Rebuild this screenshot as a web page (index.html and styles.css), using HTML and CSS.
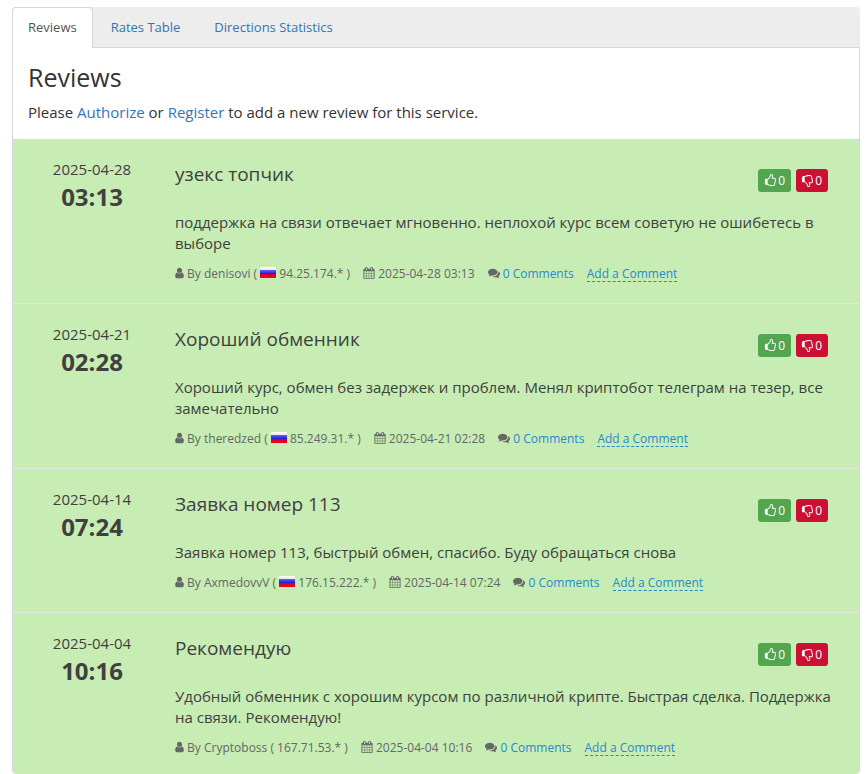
FILE: index.html
```html
<!DOCTYPE html>
<html lang="en">
<head>
<meta charset="utf-8">
<title>Reviews</title>
<meta name="viewport" content="width=device-width, initial-scale=1">
<link rel="stylesheet" href="styles.css">
</head>
<body>
<svg class="sprite" aria-hidden="true">
  <symbol id="user" viewBox="256 0 1280 1792"><path d="M1536 1399q0 109-62.5 187t-150.5 78h-854q-88 0-150.5-78t-62.5-187q0-85 8.5-160.5t31.5-152 58.5-131 94-89 134.5-34.5q131 128 313 128t313-128q76 0 134.5 34.5t94 89 58.5 131 31.5 152 8.5 160.5zm-256-887q0 159-112.5 271.5t-271.5 112.5-271.5-112.5-112.5-271.5 112.5-271.5 271.5-112.5 271.5 112.5 112.5 271.5z"/></symbol>
  <symbol id="calendar" viewBox="64 0 1664 1792"><path d="M192 1664h288v-288h-288v288zm352 0h320v-288h-320v288zm-352-352h288v-320h-288v320zm352 0h320v-320h-320v320zm-352-384h288v-288h-288v288zm736 736h320v-288h-320v288zm-384-736h320v-288h-320v288zm768 736h288v-288h-288v288zm-384-352h320v-320h-320v320zm-352-864v-288q0-13-9.5-22.5t-22.5-9.5h-64q-13 0-22.5 9.5t-9.5 22.5v288q0 13 9.5 22.5t22.5 9.5h64q13 0 22.5-9.5t9.5-22.5zm736 864h288v-320h-288v320zm-384-384h320v-288h-320v288zm384 0h288v-288h-288v288zm32-480v-288q0-13-9.5-22.5t-22.5-9.5h-64q-13 0-22.5 9.5t-9.5 22.5v288q0 13 9.5 22.5t22.5 9.5h64q13 0 22.5-9.5t9.5-22.5zm384-64v1280q0 52-38 90t-90 38h-1408q-52 0-90-38t-38-90v-1280q0-52 38-90t90-38h128v-96q0-66 47-113t113-47h64q66 0 113 47t47 113v96h384v-96q0-66 47-113t113-47h64q66 0 113 47t47 113v96h128q52 0 90 38t38 90z"/></symbol>
  <symbol id="comments" viewBox="0 0 1792 1792"><path d="M1408 768q0 139-94 257t-256.5 186.5-353.5 68.5q-86 0-176-16-124 88-278 128-36 9-86 16h-3q-11 0-20.5-8t-11.5-21q-1-3-1-6.5t.5-6.5 2-6l2.5-5 3.5-5.5 4-5 4.5-5 4-4.5q5-6 23-25t26-29.5 22.5-29 25-38.5 20.5-44q-124-72-195-177t-71-224q0-139 94-257t256.5-186.5 353.5-68.5 353.5 68.5 256.5 186.5 94 257zm384 256q0 120-71 224.5t-195 176.5q10 24 20.5 44t25 38.5 22.5 29 26 29.5 23 25q1 1 4 4.5t4.5 5 4 5 3.5 5.5l2.5 5 2 6 .5 6.5-1 6.5q-3 14-13 22t-22 7q-50-7-86-16-154-40-278-128-90 16-176 16-271 0-472-132 58 4 88 4 161 0 309-45t264-129q125-92 192-212t67-254q0-77-23-152 129 71 204 178t75 230z"/></symbol>
  <symbol id="up" viewBox="0 0 1664 1792"><path d="M256 1408q0-26-19-45t-45-19-45 19-19 45 19 45 45 19 45-19 19-45zm1280-640q0-51-39-89.5t-89-38.5h-352q0-58 48-159.5t48-160.5q0-98-32-145t-128-47q-26 26-38 85t-30.5 125.5-59.5 109.5q-22 23-77 91-4 5-23 30t-31.5 41-34.5 42.5-40 44-38.5 35.5-40 27-35.5 9h-32v640h32q13 0 31.5 3t33 6.5 38 11 35 11.5 35.5 12.5 29 10.5q211 73 342 73h121q192 0 192-167 0-26-5-56 30-16 47.5-52.5t17.5-73.5-18-69q53-50 53-119 0-25-10-55.5t-25-47.5q32-1 53.5-47t21.5-81zm128-1q0 89-49 163 9 33 9 69 0 77-38 144 3 21 3 43 0 101-60 178 1 139-85 219.5t-227 80.5h-129q-96 0-189.5-22.5t-216.5-65.5q-116-40-138-40h-288q-53 0-90.5-37.5t-37.5-90.5v-640q0-53 37.5-90.5t90.5-37.5h274q36-24 137-155 58-75 107-128 24-25 35.5-85.5t30.5-126.5 62-108q39-37 90-37 84 0 151 32.5t102 101.5 35 186q0 93-48 192h176q104 0 180 76t76 179z"/></symbol>
  <symbol id="down" viewBox="0 0 1664 1792"><use href="#up" width="1664" height="1792" transform="translate(0 1792) scale(1 -1)"/></symbol>
  <linearGradient id="w" x2="0" y2="1"><stop offset="0" stop-color="#fff"/><stop offset="1" stop-color="#ddd"/></linearGradient>
  <linearGradient id="b" x2="0" y2="1"><stop offset="0" stop-color="#6464f5"/><stop offset="1" stop-color="#0505c8"/></linearGradient>
  <linearGradient id="r" x2="0" y2="1"><stop offset="0" stop-color="#c8003c"/><stop offset="1" stop-color="#fa0014"/></linearGradient>
  <symbol id="ru" viewBox="0 0 16 11"><path fill="url(#w)" d="M0 0h16v4H0z"/><path fill="url(#b)" d="M0 3h16v5H0z"/><path fill="url(#r)" d="M0 7h16v4H0z"/></symbol>
</svg>

<main class="panel">
  <nav class="tabs">
    <a class="tab active" href="#reviews">Reviews</a>
    <a class="tab" href="#rates">Rates Table</a>
    <a class="tab" href="#directions">Directions Statistics</a>
  </nav>
  <section class="body" id="reviews">
    <header class="intro">
      <h1>Reviews</h1>
      <p>Please <a href="#authorize">Authorize</a> or <a href="#register">Register</a> to add a new review for this service.</p>
    </header>

    <article class="review">
      <div class="when"><span>2025-04-28</span><strong>03:13</strong></div>
      <div class="content">
        <div class="head">
          <h2>узекс топчик</h2>
          <div class="votes">
            <button class="vote good" type="button" aria-label="Like, 0"><svg><use href="#up"/></svg>0</button>
            <button class="vote bad" type="button" aria-label="Dislike, 0"><svg><use href="#down"/></svg>0</button>
          </div>
        </div>
        <p class="text">поддержка на связи отвечает мгновенно. неплохой курс всем советую не ошибетесь в выборе</p>
        <div class="meta">
          <span><svg class="i-user"><use href="#user"/></svg> By denisovi ( <svg class="flag"><use href="#ru"/></svg> 94.25.174.* )</span>
          <span><svg class="i-cal"><use href="#calendar"/></svg> 2025-04-28 03:13</span>
          <span><svg class="i-com"><use href="#comments"/></svg> <a href="#comments-1">0 Comments</a></span>
          <a class="add" href="#add-1">Add a Comment</a>
        </div>
      </div>
    </article>

    <article class="review">
      <div class="when"><span>2025-04-21</span><strong>02:28</strong></div>
      <div class="content">
        <div class="head">
          <h2>Хороший обменник</h2>
          <div class="votes">
            <button class="vote good" type="button" aria-label="Like, 0"><svg><use href="#up"/></svg>0</button>
            <button class="vote bad" type="button" aria-label="Dislike, 0"><svg><use href="#down"/></svg>0</button>
          </div>
        </div>
        <p class="text">Хороший курс, обмен без задержек и проблем. Менял криптобот телеграм на тезер, все замечательно</p>
        <div class="meta">
          <span><svg class="i-user"><use href="#user"/></svg> By theredzed ( <svg class="flag"><use href="#ru"/></svg> 85.249.31.* )</span>
          <span><svg class="i-cal"><use href="#calendar"/></svg> 2025-04-21 02:28</span>
          <span><svg class="i-com"><use href="#comments"/></svg> <a href="#comments-2">0 Comments</a></span>
          <a class="add" href="#add-2">Add a Comment</a>
        </div>
      </div>
    </article>

    <article class="review">
      <div class="when"><span>2025-04-14</span><strong>07:24</strong></div>
      <div class="content">
        <div class="head">
          <h2>Заявка номер 113</h2>
          <div class="votes">
            <button class="vote good" type="button" aria-label="Like, 0"><svg><use href="#up"/></svg>0</button>
            <button class="vote bad" type="button" aria-label="Dislike, 0"><svg><use href="#down"/></svg>0</button>
          </div>
        </div>
        <p class="text">Заявка номер 113, быстрый обмен, спасибо. Буду обращаться снова</p>
        <div class="meta">
          <span><svg class="i-user"><use href="#user"/></svg> By AxmedovvV ( <svg class="flag"><use href="#ru"/></svg> 176.15.222.* )</span>
          <span><svg class="i-cal"><use href="#calendar"/></svg> 2025-04-14 07:24</span>
          <span><svg class="i-com"><use href="#comments"/></svg> <a href="#comments-3">0 Comments</a></span>
          <a class="add" href="#add-3">Add a Comment</a>
        </div>
      </div>
    </article>

    <article class="review">
      <div class="when"><span>2025-04-04</span><strong>10:16</strong></div>
      <div class="content">
        <div class="head">
          <h2>Рекомендую</h2>
          <div class="votes">
            <button class="vote good" type="button" aria-label="Like, 0"><svg><use href="#up"/></svg>0</button>
            <button class="vote bad" type="button" aria-label="Dislike, 0"><svg><use href="#down"/></svg>0</button>
          </div>
        </div>
        <p class="text">Удобный обменник с хорошим курсом по различной крипте. Быстрая сделка. Поддержка на связи. Рекомендую!</p>
        <div class="meta">
          <span><svg class="i-user"><use href="#user"/></svg> By Cryptoboss ( 167.71.53.* )</span>
          <span><svg class="i-cal"><use href="#calendar"/></svg> 2025-04-04 10:16</span>
          <span><svg class="i-com"><use href="#comments"/></svg> <a href="#comments-4">0 Comments</a></span>
          <a class="add" href="#add-4">Add a Comment</a>
        </div>
      </div>
    </article>
  </section>
</main>
</body>
</html>
```
FILE: styles.css
```css
* { box-sizing: border-box; }

body {
  margin: 0;
  background: #fff;
  color: #333;
  font: 15px/21px "Open Sans", Arial, sans-serif;
}

h1, h2, p { margin: 0; font-weight: 400; }

a { color: #3276b1; text-decoration: none; }

.sprite { position: absolute; width: 0; height: 0; }

.panel { margin: 7px 8px 0 12px; }

.tabs {
  display: flex;
  gap: 2px;
  background: #ededed;
  border-bottom: 1px solid #d6d6d6;
  border-radius: 4px 4px 0 0;
}

.tab {
  padding: 10px 15px;
  border: 1px solid transparent;
  border-bottom: 0;
  border-radius: 4px 4px 0 0;
  font-size: 13px;
  line-height: 19px;
}

.tab.active {
  margin-bottom: -1px;
  padding-bottom: 11px;
  background: #fff;
  border-color: #d6d6d6;
  color: #555;
}

.body {
  border: 1px solid #d6d6d6;
  border-width: 0 1px;
  border-radius: 0 0 4px 4px;
  overflow: hidden;
}

.intro { padding: 11px 15px 16px; }

.intro h1 {
  margin-bottom: 7px;
  font-size: 25px;
  line-height: 36px;
}

.review {
  display: grid;
  grid-template-columns: 126px 1fr;
  gap: 20px;
  padding: 20px 24px 20px 16px;
  background: #c7edb4;
  border-bottom: 1px solid #e5e5e5;
  color: #404040;
}

.review:last-child {
  padding-bottom: 17px;
  border-bottom: 0;
}

.when {
  display: flex;
  flex-direction: column;
  text-align: center;
}

.when strong { font-size: 24px; line-height: 33px; }

.head {
  display: flex;
  justify-content: space-between;
  padding-right: 7px;
}

.head h2 { padding-top: 2px; font-size: 19px; line-height: 27px; }

.votes { display: flex; gap: 5px; padding-top: 10px; }

.vote {
  display: flex;
  align-items: center;
  gap: 2px;
  height: 23px;
  padding: 0 6px;
  border: 0;
  border-radius: 3px;
  color: #fff;
  font: 12px/18px "Open Sans", Arial, sans-serif;
}

.vote svg { width: 12px; height: 13px; }
.good { background: #53a650; }
.bad { padding-left: 5px; background: #cc1034; }

svg { fill: currentColor; }

.text { margin-top: 20px; }

.meta {
  display: flex;
  flex-wrap: wrap;
  gap: 13px;
  margin-top: 11px;
  color: #666;
  font-size: 12px;
  line-height: 18px;
}

.meta a { color: #2a88cc; }
.meta svg { vertical-align: -1px; }
.i-user { width: 9px; height: 12px; }
.i-cal { width: 12px; height: 12px; }
.i-com { width: 12px; height: 12px; }
.meta .flag { width: 16px; height: 11px; vertical-align: 0; }

.meta .add {
  height: 17px;
  border-bottom: 1px dashed #2a88cc;
}
```
